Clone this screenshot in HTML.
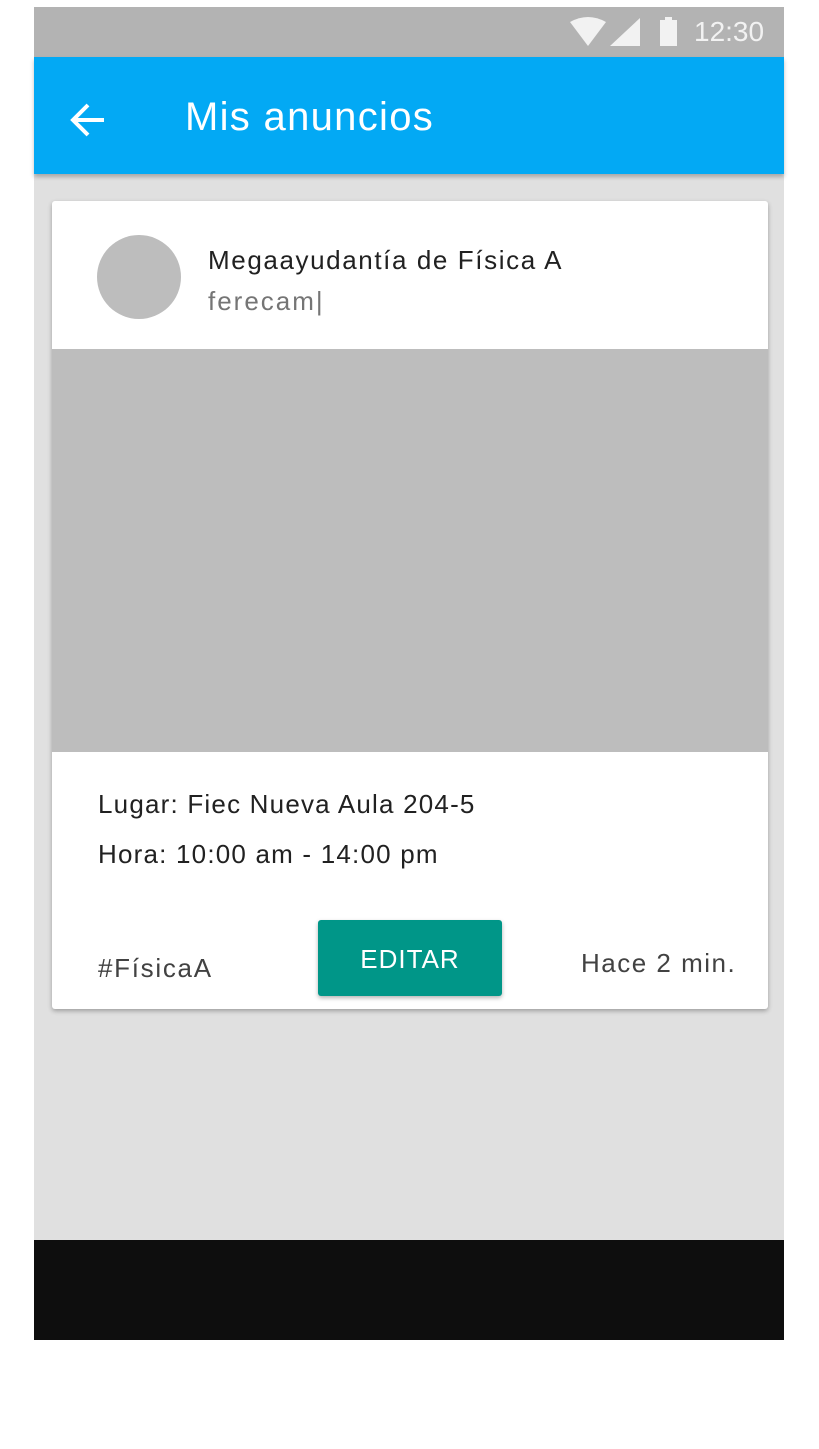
<!DOCTYPE html>
<html><head><meta charset="utf-8"><style>
*{margin:0;padding:0;box-sizing:border-box}
body{width:819px;height:1449px;background:#fff;font-family:"Liberation Sans",sans-serif;position:relative;overflow:hidden}
.a{position:absolute;white-space:nowrap}
</style></head><body>
<div class="a" style="left:34px;top:7px;width:750px;height:1333px;background:#e0e0e0"></div>
<div class="a" style="left:34px;top:7px;width:750px;height:50px;background:#b3b3b3"></div>
<svg class="a" style="left:568px;top:16px" width="120" height="32">
<path d="M2 6 Q20 -4 38 6 L20 30 Z" fill="#f2f2f2"/>
<path d="M42 30 L72 30 L72 2 Z" fill="#f2f2f2"/>
<rect x="92" y="4" width="17" height="26" fill="#f2f2f2"/><rect x="97" y="1" width="7" height="4" fill="#f2f2f2"/>
</svg>
<div class="a" style="left:694px;top:16px;font-size:28px;color:#f2f2f2">12:30</div>
<div class="a" style="left:34px;top:57px;width:750px;height:117px;background:#03a9f4;box-shadow:0 3px 4px rgba(0,0,0,.25)"></div>
<svg class="a" style="left:68px;top:100px" width="40" height="40"><path d="M36 20 H6 M20 5 L5 20 L20 35" stroke="#fff" stroke-width="4" fill="none"/></svg>
<div class="a" style="left:185px;top:95px;font-size:40px;letter-spacing:1.3px;color:#fff">Mis anuncios</div>
<div class="a" style="left:52px;top:201px;width:716px;height:808px;background:#fff;border-radius:3px;box-shadow:0 2px 5px rgba(0,0,0,.3)"></div>
<div class="a" style="left:97px;top:235px;width:84px;height:84px;border-radius:50%;background:#bdbdbd"></div>
<div class="a" style="left:208px;top:245px;font-size:26px;letter-spacing:1.6px;color:#212121">Megaayudantía de Física A</div>
<div class="a" style="left:208px;top:286px;font-size:26px;letter-spacing:2px;color:#757575">ferecam|</div>
<div class="a" style="left:52px;top:349px;width:716px;height:403px;background:#bdbdbd"></div>
<div class="a" style="left:98px;top:789px;font-size:26px;letter-spacing:1.2px;color:#212121">Lugar: Fiec Nueva Aula 204-5</div>
<div class="a" style="left:98px;top:839px;font-size:26px;letter-spacing:1.2px;color:#212121">Hora: 10:00 am - 14:00 pm</div>
<div class="a" style="left:98px;top:953px;font-size:26px;letter-spacing:1.7px;color:#424242">#FísicaA</div>
<div class="a" style="left:318px;top:920px;width:184px;height:76px;background:#009688;border-radius:3px;box-shadow:0 2px 4px rgba(0,0,0,.3);color:#fff;font-size:26px;letter-spacing:1px;text-align:center;line-height:78px">EDITAR</div>
<div class="a" style="left:581px;top:948px;font-size:26px;letter-spacing:1.5px;color:#424242">Hace 2 min.</div>
<div class="a" style="left:34px;top:1240px;width:750px;height:100px;background:#0e0e0e"></div>
</body></html>
